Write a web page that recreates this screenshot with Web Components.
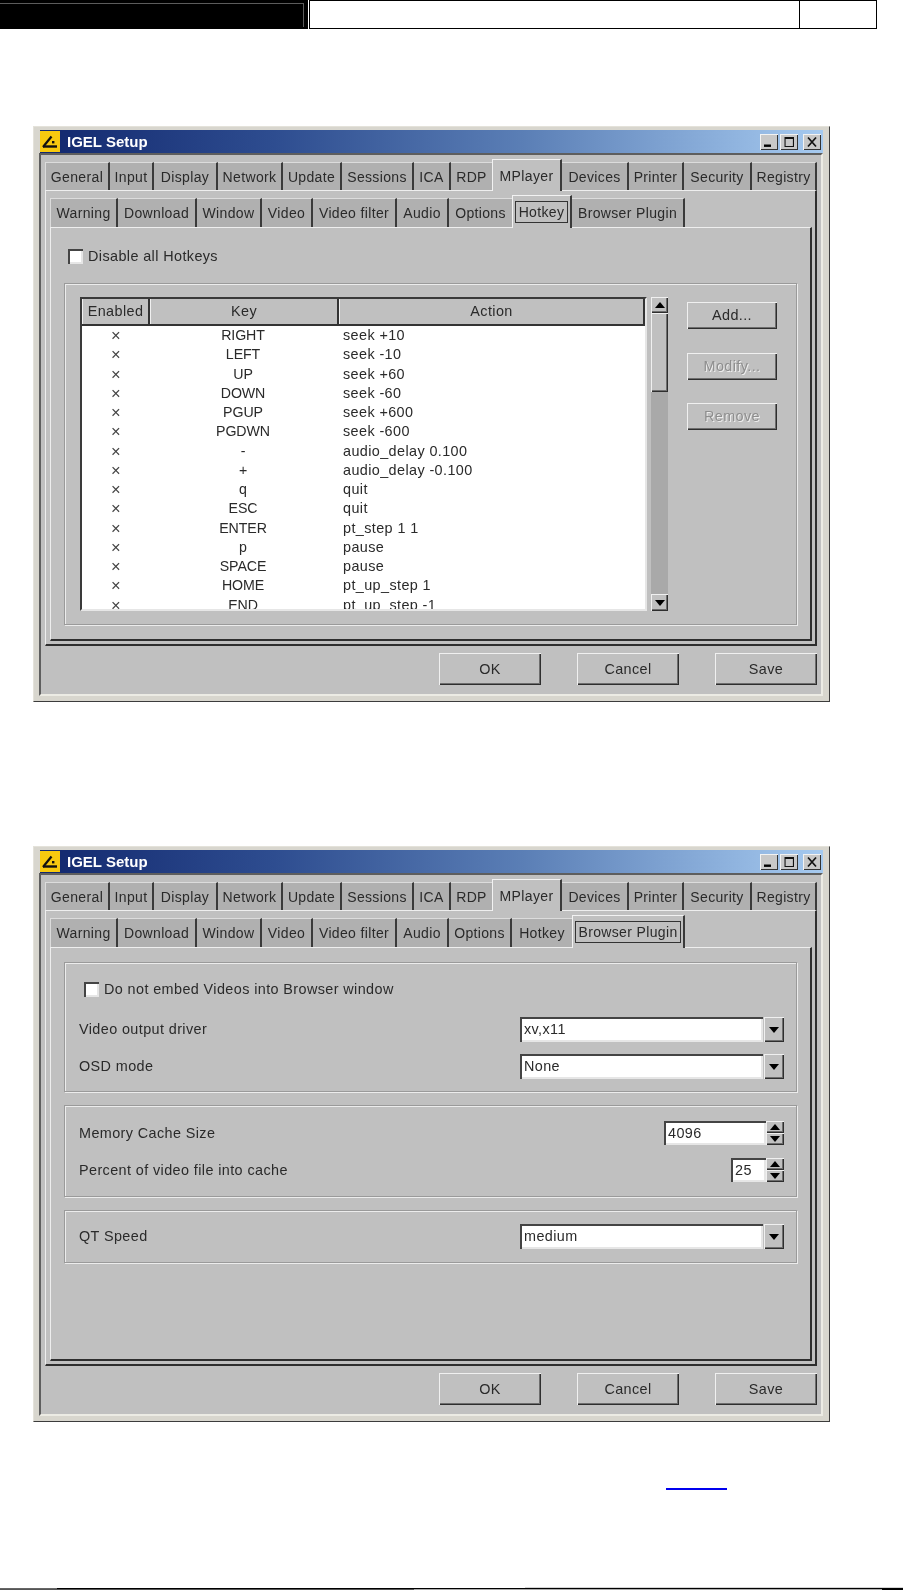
<!DOCTYPE html>
<html lang="en">
<head>
<meta charset="utf-8">
<title>IGEL Setup</title>
<style>
    html, body { margin: 0; padding: 0; background: #fff; }
    body { width: 903px; height: 1590px; overflow: hidden; font-family: "Liberation Sans", Arial, sans-serif; }
    igel-window { margin-left: 33px; }
    #first { margin-top: 97px; }
    #second { margin-top: 144px; }
</style>
</head>
<body>
<page-header></page-header>

<igel-window id="first" active="Hotkey">
    <check-box style="margin: 21px 0 19px 4px">Disable all Hotkeys</check-box>
    <group-box style="height: 342px; padding: 13px 0 0 15px; flex-direction: row">
        <hotkey-table></hotkey-table>
        <scroll-bar></scroll-bar>
        <side-buttons>
            <bevel-button>Add...</bevel-button>
            <bevel-button disabled>Modify...</bevel-button>
            <bevel-button disabled>Remove</bevel-button>
        </side-buttons>
    </group-box>
</igel-window>

<igel-window id="second" active="Browser Plugin">
    <group-box style="height: 130px; margin-top: 14px; padding: 19px 12px 0 13px">
        <check-box style="margin: 0 0 20px 6px">Do not embed Videos into Browser window</check-box>
        <form-row label="Video output driver" style="margin-bottom: 12px"><combo-box value="xv,x11"></combo-box></form-row>
        <form-row label="OSD mode"><combo-box value="None"></combo-box></form-row>
    </group-box>
    <group-box style="height: 92px; margin-top: 13px; padding: 15px 12px 0 13px">
        <form-row label="Memory Cache Size" style="margin-bottom: 13px"><spin-box value="4096" width="102"></spin-box></form-row>
        <form-row label="Percent of video file into cache"><spin-box value="25" width="35"></spin-box></form-row>
    </group-box>
    <group-box style="height: 53px; margin-top: 13px; padding: 13px 12px 0 13px">
        <form-row label="QT Speed"><combo-box value="medium"></combo-box></form-row>
    </group-box>
</igel-window>

<link-rule></link-rule>
<page-rule></page-rule>

<script>
const UI_FONT = `font: 14.4px/1 "Liberation Sans", Arial, sans-serif; letter-spacing: .4px; color: #2a2a2a;`;
const RAISED = `background: #c0c0c0; box-shadow: inset 1px 1px 0 #f0f0f0, inset -1px -1px 0 #2e2e2e, inset -2px -2px 0 #6e6e6e;`;
const SUNKEN = `background: #fff; box-shadow: inset 2px 2px 0 #444, inset -2px -2px 0 #e6e6e6;`;

class PageHeader extends HTMLElement {
    constructor() {
        super();
        const shadow = this.attachShadow({ mode: 'open' });
        shadow.innerHTML = `
      <style>
        :host { display: flex; height: 29px; width: 877px; }
        .black { width: 308px; background: #000; box-sizing: border-box; padding-top: 3px; }
        .line { width: 304px; height: 24px; box-sizing: border-box; border-top: 1px solid #5c5c5c; border-right: 1px solid #5c5c5c; }
        .cells { flex: 1; margin-left: 1px; display: flex; border: 1px solid #000; }
        .wide { flex: 1; border-right: 1px solid #000; }
        .page { width: 76px; }
      </style>
      <div class="black"><div class="line"></div></div>
      <div class="cells"><div class="wide"></div><div class="page"></div></div>
    `;
    }
}

class TabStrip extends HTMLElement {
    connectedCallback() {
        const shadow = this.attachShadow({ mode: 'open' });
        const active = this.getAttribute('active');
        const focused = this.hasAttribute('focused');
        const tabs = this.getAttribute('tabs').split(',').map((t) => t.split(':'));
        shadow.innerHTML = `
      <style>
        :host { display: flex; align-items: flex-end; ${UI_FONT} font-size: 14px; letter-spacing: .35px; }
        .tab {
          height: var(--tab-height);
          box-sizing: border-box;
          display: flex;
          align-items: center;
          justify-content: center;
          background: #b0b0b0;
          border-top: 1px solid #dcdcdc;
          border-right: 2px solid #3a3a3a;
          white-space: nowrap;
        }
        .tab.first { border-left: 1px solid #dcdcdc; }
        .tab.before { border-right: 0; }
        .active {
          height: calc(var(--tab-height) + 4px);
          margin-bottom: -1px;
          position: relative;
          z-index: 1;
          background: #c0c0c0;
          border-top: 1px solid #f2f2f2;
          border-left: 1px solid #f2f2f2;
          border-right: 2px solid #3a3a3a;
        }
        .focus { border: 1px solid #333; padding: 3px 0; margin: 0 2px; flex: 1; text-align: center; }
      </style>
      ${tabs.map(([name, width], i) => {
            const isActive = name === active;
            const before = tabs[i + 1] && tabs[i + 1][0] === active;
            const cls = ['tab', i === 0 ? 'first' : '', isActive ? 'active' : '', before ? 'before' : ''].join(' ');
            const label = isActive && focused ? `<span class="focus">${name}</span>` : name;
            return `<div class="${cls}" style="width:${width}px">${label}</div>`;
        }).join('')}
    `;
    }
}

class TitleButtons extends HTMLElement {
    constructor() {
        super();
        const shadow = this.attachShadow({ mode: 'open' });
        shadow.innerHTML = `
      <style>
        :host { display: flex; gap: 2px; }
        .b { width: 18px; height: 16px; background: #c8c8c8; box-shadow: inset 1px 1px 0 #f2f2f2, inset -1px -1px 0 #333; display: block; }
      </style>
      <svg class="b" viewBox="0 0 18 16"><rect x="4" y="10.5" width="7" height="2.4" fill="#000"/></svg>
      <svg class="b" viewBox="0 0 18 16"><path d="M4.5 3h9.5v10H4.5zM5.6 5V11.9h7.3V5z" fill="#111" fill-rule="evenodd"/></svg>
      <svg class="b" style="margin-left:3px" viewBox="0 0 18 16"><path d="M5 3.5l8 9M13 3.5l-8 9" stroke="#111" stroke-width="1.7" fill="none"/></svg>
    `;
    }
}

class IgelWindow extends HTMLElement {
    connectedCallback() {
        const shadow = this.attachShadow({ mode: 'open' });
        const active = this.getAttribute('active');
        shadow.innerHTML = `
      <style>
        :host {
          display: block;
          width: 797px;
          height: 576px;
          box-sizing: border-box;
          background: #d8d6ce;
          border: 1px solid;
          border-color: #e4e2da #3c3c3c #3c3c3c #e4e2da;
          padding: 3px 6px 5px 5px;
          filter: blur(.35px);
        }
        .titlebar {
          height: 23px;
          margin-left: 1px;
          display: flex;
          align-items: center;
          gap: 7px;
          background: linear-gradient(90deg, #12286e 0%, #2e4d90 30%, #5b7fb6 62%, #a6caf0 100%);
          font: bold 15px "Liberation Sans", Arial, sans-serif;
          color: #fff;
          padding-right: 2px;
        }
        .titlebar svg.logo { width: 20px; height: 21px; flex: none; }
        .titlebar span { flex: 1; }
        .client {
          height: 543px;
          box-sizing: border-box;
          background: #c0c0c0;
          border: 2px solid;
          border-color: #5e5e5e #ecebe4 #ecebe4 #5e5e5e;
          padding: 4px 4px 0 4px;
        }
        .outer-tabs { --tab-height: 28px; }
        .outer-pane {
          height: 456px;
          box-sizing: border-box;
          border: 1px solid #eee;
          border-right: 2px solid #2e2e2e;
          border-bottom: 2px solid #2e2e2e;
          padding: 4px 3px 0 4px;
        }
        .inner-tabs { --tab-height: 29px; }
        .inner-pane {
          height: 414px;
          box-sizing: border-box;
          border: 1px solid #eee;
          border-right: 2px solid #2e2e2e;
          border-bottom: 2px solid #2e2e2e;
          padding: 0 13px;
          display: flex;
          flex-direction: column;
          align-items: stretch;
        }
        .footer { display: flex; justify-content: flex-end; gap: 36px; margin-top: 7px; padding-right: 0; }
        .footer bevel-button { --w: 102px; --h: 32px; }
      </style>
      <div class="titlebar">
        <svg class="logo" viewBox="0 0 20 21">
          <rect width="20" height="21" fill="#f7c90f"/>
          <path d="M3 16L11.5 5.5" stroke="#111" stroke-width="2.2"/>
          <path d="M3 15.5H17" stroke="#111" stroke-width="2.4"/>
          <rect x="12" y="10" width="2.4" height="2.4" fill="#111"/>
        </svg>
        <span>IGEL Setup</span>
        <title-buttons></title-buttons>
      </div>
      <div class="client">
        <tab-strip class="outer-tabs" active="MPlayer"
          tabs="General:65,Input:44,Display:64,Network:65,Update:59,Sessions:72,ICA:37,RDP:41,MPlayer:70,Devices:67,Printer:55,Security:68,Registry:65"></tab-strip>
        <div class="outer-pane">
          <tab-strip class="inner-tabs" active="${active}" focused
            tabs="Warning:68,Download:79,Window:65,Video:51,Video filter:84,Audio:52,Options:63,Hotkey:60,Browser Plugin:113"></tab-strip>
          <div class="inner-pane"><slot></slot></div>
        </div>
        <div class="footer">
          <bevel-button>OK</bevel-button>
          <bevel-button>Cancel</bevel-button>
          <bevel-button>Save</bevel-button>
        </div>
      </div>
    `;
    }
}

class BevelButton extends HTMLElement {
    constructor() {
        super();
        const shadow = this.attachShadow({ mode: 'open' });
        shadow.innerHTML = `
      <style>
        :host {
          display: flex;
          align-items: center;
          justify-content: center;
          flex: none;
          width: var(--w, 90px);
          height: var(--h, 27px);
          ${UI_FONT}
          ${RAISED}
        }
        :host([disabled]) { color: #8e8e8e; text-shadow: 1px 1px 0 #eee; }
      </style>
      <slot></slot>
    `;
    }
}

class SideButtons extends HTMLElement {
    constructor() {
        super();
        const shadow = this.attachShadow({ mode: 'open' });
        shadow.innerHTML = `
      <style>
        :host { display: flex; flex-direction: column; gap: 23.5px; margin: 5px 0 0 19px; }
      </style>
      <slot></slot>
    `;
    }
}

class CheckBox extends HTMLElement {
    constructor() {
        super();
        const shadow = this.attachShadow({ mode: 'open' });
        shadow.innerHTML = `
      <style>
        :host { display: flex; align-items: center; gap: 5px; height: 15px; flex: none; ${UI_FONT} }
        .box { width: 15px; height: 15px; flex: none; ${SUNKEN} }
      </style>
      <div class="box"></div><slot></slot>
    `;
    }
}

class GroupBox extends HTMLElement {
    constructor() {
        super();
        const shadow = this.attachShadow({ mode: 'open' });
        shadow.innerHTML = `
      <style>
        :host {
          display: flex;
          flex-direction: column;
          flex: none;
          box-sizing: border-box;
          border: 1px solid #9a9a9a;
          box-shadow: inset 1px 1px 0 #ececec, 1px 1px 0 #ececec;
        }
      </style>
      <slot></slot>
    `;
    }
}

const HOTKEYS = [
    ['RIGHT', 'seek +10'], ['LEFT', 'seek -10'], ['UP', 'seek +60'], ['DOWN', 'seek -60'],
    ['PGUP', 'seek +600'], ['PGDWN', 'seek -600'], ['-', 'audio_delay 0.100'], ['+', 'audio_delay -0.100'],
    ['q', 'quit'], ['ESC', 'quit'], ['ENTER', 'pt_step 1 1'], ['p', 'pause'],
    ['SPACE', 'pause'], ['HOME', 'pt_up_step 1'], ['END', 'pt_up_step -1'],
];

class HotkeyTable extends HTMLElement {
    constructor() {
        super();
        const shadow = this.attachShadow({ mode: 'open' });
        shadow.innerHTML = `
      <style>
        :host {
          display: block;
          flex: none;
          width: 567px;
          height: 314px;
          box-sizing: border-box;
          overflow: hidden;
          background: #fff;
          border: 2px solid;
          border-color: #3a3a3a #e6e6e6 #e6e6e6 #3a3a3a;
          ${UI_FONT}
        }
        .row { display: grid; grid-template-columns: 68px 189px 1fr; }
        .head { height: 25px; background: #c0c0c0; border-bottom: 2px solid #333; box-sizing: content-box; }
        .head div {
          display: flex; align-items: center; justify-content: center;
          border-left: 1px solid #f0f0f0;
          border-right: 2px solid #333;
          box-sizing: border-box;
        }
        .body .row { height: 19.25px; line-height: 19.25px; }
        .x { text-align: center; font-size: 16.5px; color: #444; }
        .k { text-align: center; padding-right: 3px; font-size: 14.2px; letter-spacing: -.1px; }
        .a { padding-left: 4px; }
      </style>
      <div class="row head"><div>Enabled</div><div>Key</div><div>Action</div></div>
      <div class="body">
        ${HOTKEYS.map(([key, action]) => `<div class="row"><div class="x">×</div><div class="k">${key}</div><div class="a">${action}</div></div>`).join('')}
      </div>
    `;
    }
}

class ArrowButton extends HTMLElement {
    constructor() {
        super();
        const shadow = this.attachShadow({ mode: 'open' });
        shadow.innerHTML = `
      <style>
        :host { display: flex; align-items: center; justify-content: center; flex: none; ${RAISED} }
        .arrow { width: 0; height: 0; border-left: 5px solid transparent; border-right: 5px solid transparent; }
        :host([dir="up"]) .arrow { border-bottom: 6px solid #000; }
        :host([dir="down"]) .arrow { border-top: 6px solid #000; }
      </style>
      <div class="arrow"></div>
    `;
    }
}

class ScrollBar extends HTMLElement {
    constructor() {
        super();
        const shadow = this.attachShadow({ mode: 'open' });
        shadow.innerHTML = `
      <style>
        :host { display: flex; flex-direction: column; flex: none; width: 17px; height: 314px; margin-left: 4px; background: #a9a9a9; }
        arrow-button { height: 16px; }
        .thumb { height: 79px; ${RAISED} }
        .trough { flex: 1; }
        .last { height: 17px; }
      </style>
      <arrow-button dir="up"></arrow-button>
      <div class="thumb"></div>
      <div class="trough"></div>
      <arrow-button class="last" dir="down"></arrow-button>
    `;
    }
}

class FormRow extends HTMLElement {
    connectedCallback() {
        const shadow = this.attachShadow({ mode: 'open' });
        shadow.innerHTML = `
      <style>
        :host { display: flex; align-items: center; justify-content: space-between; flex: none; ${UI_FONT} }
        .label { padding-left: 1px; }
      </style>
      <div class="label">${this.getAttribute('label')}</div>
      <slot></slot>
    `;
    }
}

class ComboBox extends HTMLElement {
    connectedCallback() {
        const shadow = this.attachShadow({ mode: 'open' });
        shadow.innerHTML = `
      <style>
        :host { display: flex; width: 264px; height: 25px; ${UI_FONT} }
        .field { flex: 1; display: flex; align-items: center; padding-left: 4px; ${SUNKEN} }
        arrow-button { width: 20px; margin-left: 1px; }
      </style>
      <div class="field">${this.getAttribute('value')}</div>
      <arrow-button dir="down"></arrow-button>
    `;
    }
}

class SpinBox extends HTMLElement {
    connectedCallback() {
        const shadow = this.attachShadow({ mode: 'open' });
        shadow.innerHTML = `
      <style>
        :host { display: flex; height: 24px; ${UI_FONT} }
        .field { display: flex; align-items: center; padding-left: 4px; box-sizing: border-box; ${SUNKEN} }
        .btns { display: flex; flex-direction: column; width: 18px; }
        arrow-button { flex: 1; }
      </style>
      <div class="field" style="width:${this.getAttribute('width')}px">${this.getAttribute('value')}</div>
      <div class="btns"><arrow-button dir="up"></arrow-button><arrow-button dir="down"></arrow-button></div>
    `;
    }
}

class LinkRule extends HTMLElement {
    constructor() {
        super();
        const shadow = this.attachShadow({ mode: 'open' });
        shadow.innerHTML = `
      <style>
        :host { display: block; width: 61px; height: 2px; margin: 66px 0 0 666px; background: #0000ee; }
      </style>
    `;
    }
}

class PageRule extends HTMLElement {
    constructor() {
        super();
        const shadow = this.attachShadow({ mode: 'open' });
        shadow.innerHTML = `
      <style>
        :host { display: block; height: 3px; margin-top: 97px; }
        .r { display: flex; height: 1px; }
        .r div { height: 1px; }
      </style>
      <div class="r"><div style="width:525px"></div><div style="flex:1;background:#d4d4d4"></div></div>
      <div class="r"><div style="width:57px;background:#666"></div><div style="width:825px;background:#000"></div><div style="flex:1;background:#000"></div></div>
      <div class="r"><div style="width:414px;background:#555"></div><div style="width:468px;background:#aaa"></div><div style="flex:1;background:#000"></div></div>
    `;
    }
}

customElements.define('page-header', PageHeader);
customElements.define('tab-strip', TabStrip);
customElements.define('title-buttons', TitleButtons);
customElements.define('bevel-button', BevelButton);
customElements.define('side-buttons', SideButtons);
customElements.define('check-box', CheckBox);
customElements.define('group-box', GroupBox);
customElements.define('hotkey-table', HotkeyTable);
customElements.define('arrow-button', ArrowButton);
customElements.define('scroll-bar', ScrollBar);
customElements.define('form-row', FormRow);
customElements.define('combo-box', ComboBox);
customElements.define('spin-box', SpinBox);
customElements.define('link-rule', LinkRule);
customElements.define('page-rule', PageRule);
customElements.define('igel-window', IgelWindow);
</script>
</body>
</html>
